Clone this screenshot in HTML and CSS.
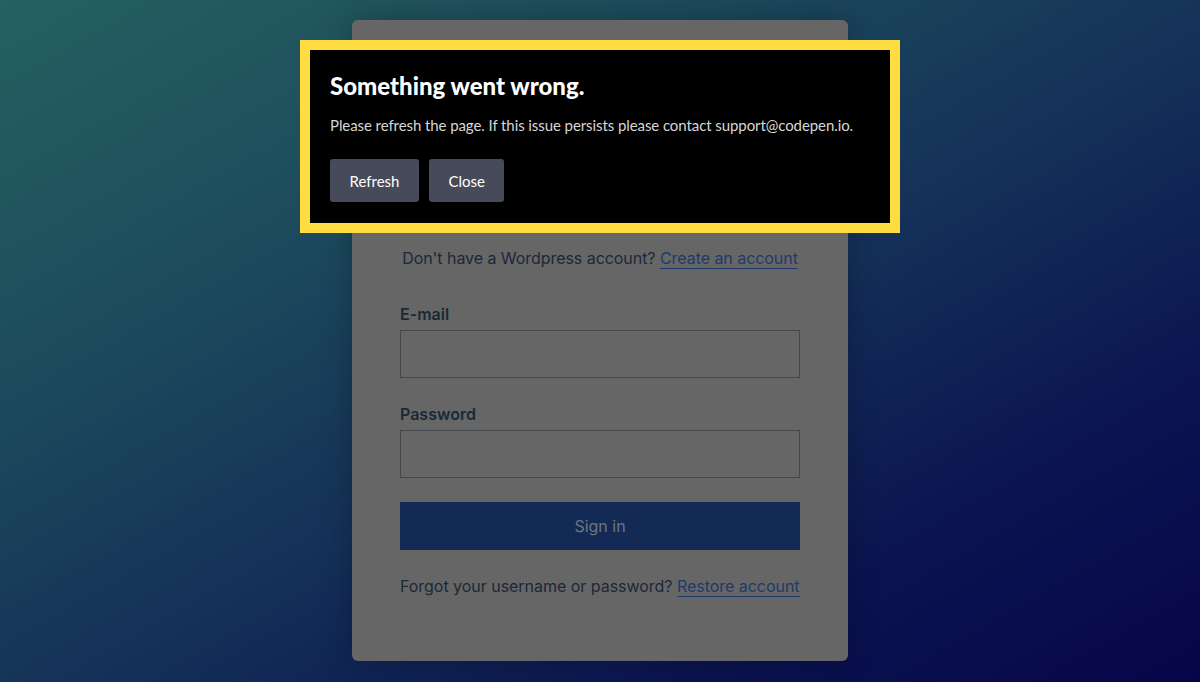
FILE: index.html
```html
<!DOCTYPE html>
<html lang="en">
<head>
    <meta charset="UTF-8">
    <meta name="viewport" content="width=device-width, initial-scale=1.0">
    <title>Sign in</title>
    <link rel="stylesheet" href="styles.css">
</head>
<body>
    <div class="login-card">
        <p class="signup-line">Don't have a Wordpress account? <a href="#" class="link">Create an account</a></p>
        <form class="login-form">
            <label class="field-label" for="email">E-mail</label>
            <input class="field-input" type="text" id="email">
            <label class="field-label" for="password">Password</label>
            <input class="field-input" type="password" id="password">
            <button type="button" class="sign-in">Sign in</button>
        </form>
        <p class="restore-line">Forgot your username or password? <a href="#" class="link">Restore account</a></p>
    </div>

    <div class="error-modal">
        <h2 class="error-title">Something went wrong.</h2>
        <p class="error-text">Please refresh the page. If this issue persists please contact support@codepen.io.</p>
        <div class="error-actions">
            <button class="error-button">Refresh</button>
            <button class="error-button">Close</button>
        </div>
    </div>
</body>
</html>
```

FILE: styles.css
```css
:root {
    --card-bg: #666666;
    --text-dark: #1b2836;
    --link-color: #1d3a6c;
    --input-border: #45494d;
    --button-bg: #132b54;
    --button-text: #6d7582;
    --modal-border: #ffdd40;
    --modal-button: #474a59;
}

html, body {
    margin: 0;
    height: 100%;
}
body {
    font-family: Inter, 'Noto Sans', sans-serif;
    background: linear-gradient(to bottom right, #256160 0%, #1c4a5c 30%, #142f58 55%, #0b1450 78%, #07054a 100%);
    position: relative;
    overflow: hidden;
}
.login-card {
    width: 496px;
    box-sizing: border-box;
    margin: 20px auto 0;
    padding: 226px 48px 63px;
    background-color: var(--card-bg);
    border-radius: 6px;
    box-shadow: 0 0 30px rgba(0, 0, 0, 0.25);
    color: var(--text-dark);
}
.signup-line, .restore-line {
    margin: 0;
    font-size: 16px;
    line-height: 24px;
    white-space: nowrap;
    letter-spacing: -0.05px;
}
.signup-line {
    text-align: center;
}
.restore-line {
    letter-spacing: -0.03px;
}
.link {
    color: var(--link-color);
    text-decoration: none;
    border-bottom: 1px solid var(--link-color);
}
.login-form {
    display: flex;
    flex-direction: column;
    margin-top: 32px;
}
.field-label {
    font-size: 16px;
    font-weight: 600;
    line-height: 24px;
    margin-bottom: 4px;
}
.field-input {
    height: 48px;
    box-sizing: border-box;
    border: 1px solid var(--input-border);
    background: transparent;
    margin: 0 0 24px;
    padding: 0 12px;
}
.sign-in {
    height: 48px;
    border: none;
    background-color: var(--button-bg);
    color: var(--button-text);
    font-family: inherit;
    font-size: 16px;
    margin-bottom: 24px;
}

/* error overlay */
.error-modal {
    position: absolute;
    top: 40px;
    left: 300px;
    width: 600px;
    box-sizing: border-box;
    border: 10px solid var(--modal-border);
    background-color: #000;
    padding: 21px 20px 21px;
    font-family: Lato, 'Open Sans', sans-serif;
    color: #fff;
}
.error-title {
    margin: 0;
    font-size: 24px;
    font-weight: 900;
    line-height: 29px;
}
.error-text {
    margin: 14px 0 23px;
    font-size: 15px;
    line-height: 22px;
    letter-spacing: -0.08px;
    color: #d6d6d6;
}
.error-actions {
    display: flex;
    gap: 10px;
}
.error-button {
    height: 43px;
    padding: 0 19.5px;
    border: none;
    border-radius: 3px;
    background-color: var(--modal-button);
    color: #fff;
    font-family: inherit;
    font-size: 15px;
}
```
